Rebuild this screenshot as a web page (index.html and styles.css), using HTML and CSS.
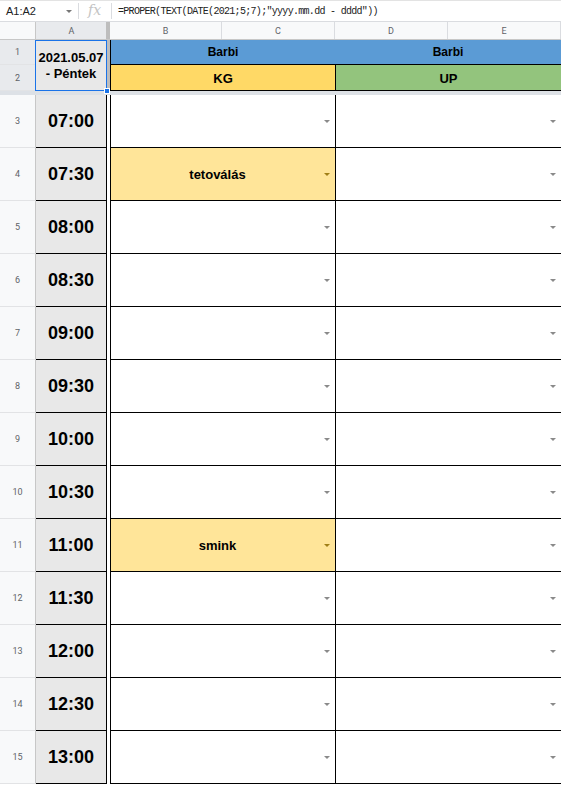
FILE: index.html
```html
<!DOCTYPE html>
<html lang="hu">

<head>
    <meta charset="UTF-8">
    <title>Beosztás</title>
    <link rel="stylesheet" href="styles.css">
</head>

<body>
    <div class="formula-bar">
        <div class="name-box">A1:A2<span class="caret"></span></div>
        <div class="fx">fx</div>
        <div class="formula">=PROPER(TEXT(DATE(2021;5;7);"yyyy.mm.dd - dddd"))</div>
    </div>

    <div class="col-heads">
        <div class="corner"></div>
        <div class="col-head sel">A</div>
        <div class="col-sep"></div>
        <div class="col-head">B</div>
        <div class="col-head">C</div>
        <div class="col-head">D</div>
        <div class="col-head">E</div>
    </div>

    <div class="frozen">
        <div class="row-num sel r1">1</div>
        <div class="row-num sel r2">2</div>
        <div class="date-cell">
            <span>2021.05.07</span>
            <span>- Péntek</span>
            <span class="handle"></span>
        </div>
        <div class="frozen-sep"></div>
        <div class="name bc">Barbi</div>
        <div class="name de">Barbi</div>
        <div class="place kg">KG</div>
        <div class="place up">UP</div>
    </div>
    <div class="frozen-line"></div>

    <div class="rows">
        <div class="row">
            <div class="row-num">3</div><div class="time">07:00</div><div class="gap"></div>
            <div class="slot"><span class="drop"></span></div><div class="slot"><span class="drop"></span></div>
        </div>
        <div class="row">
            <div class="row-num">4</div><div class="time">07:30</div><div class="gap"></div>
            <div class="slot booked">tetoválás<span class="drop"></span></div><div class="slot"><span class="drop"></span></div>
        </div>
        <div class="row">
            <div class="row-num">5</div><div class="time">08:00</div><div class="gap"></div>
            <div class="slot"><span class="drop"></span></div><div class="slot"><span class="drop"></span></div>
        </div>
        <div class="row">
            <div class="row-num">6</div><div class="time">08:30</div><div class="gap"></div>
            <div class="slot"><span class="drop"></span></div><div class="slot"><span class="drop"></span></div>
        </div>
        <div class="row">
            <div class="row-num">7</div><div class="time">09:00</div><div class="gap"></div>
            <div class="slot"><span class="drop"></span></div><div class="slot"><span class="drop"></span></div>
        </div>
        <div class="row">
            <div class="row-num">8</div><div class="time">09:30</div><div class="gap"></div>
            <div class="slot"><span class="drop"></span></div><div class="slot"><span class="drop"></span></div>
        </div>
        <div class="row">
            <div class="row-num">9</div><div class="time">10:00</div><div class="gap"></div>
            <div class="slot"><span class="drop"></span></div><div class="slot"><span class="drop"></span></div>
        </div>
        <div class="row">
            <div class="row-num">10</div><div class="time">10:30</div><div class="gap"></div>
            <div class="slot"><span class="drop"></span></div><div class="slot"><span class="drop"></span></div>
        </div>
        <div class="row">
            <div class="row-num">11</div><div class="time">11:00</div><div class="gap"></div>
            <div class="slot booked">smink<span class="drop"></span></div><div class="slot"><span class="drop"></span></div>
        </div>
        <div class="row">
            <div class="row-num">12</div><div class="time">11:30</div><div class="gap"></div>
            <div class="slot"><span class="drop"></span></div><div class="slot"><span class="drop"></span></div>
        </div>
        <div class="row">
            <div class="row-num">13</div><div class="time">12:00</div><div class="gap"></div>
            <div class="slot"><span class="drop"></span></div><div class="slot"><span class="drop"></span></div>
        </div>
        <div class="row">
            <div class="row-num">14</div><div class="time">12:30</div><div class="gap"></div>
            <div class="slot"><span class="drop"></span></div><div class="slot"><span class="drop"></span></div>
        </div>
        <div class="row">
            <div class="row-num">15</div><div class="time">13:00</div><div class="gap"></div>
            <div class="slot"><span class="drop"></span></div><div class="slot"><span class="drop"></span></div>
        </div>
    </div>
</body>

</html>
```

FILE: styles.css
```css
* {
    margin: 0;
    padding: 0;
    box-sizing: border-box;
}

body {
    width: 561px;
    background-color: #fff;
    font-family: "Liberation Sans", Arial, sans-serif;
    color: #000;
    overflow: hidden;
}

/* formula bar */
.formula-bar {
    height: 22px;
    display: flex;
    align-items: center;
    border-top: 1px solid #e3e3e3;
    border-bottom: 1px solid #dadce0;
    font-size: 11px;
}

.name-box {
    width: 79px;
    height: 16px;
    padding-left: 6px;
    display: flex;
    align-items: center;
    position: relative;
    color: #202124;
    border-right: 1px solid #dadce0;
}

.caret {
    position: absolute;
    left: 66px;
    top: 7px;
    border-left: 3px solid transparent;
    border-right: 3px solid transparent;
    border-top: 3px solid #777;
}

.fx {
    width: 33px;
    height: 16px;
    padding-left: 9px;
    font-family: "DejaVu Serif", serif;
    font-style: italic;
    font-size: 14px;
    line-height: 15px;
    color: #c4c4c4;
    border-right: 1px solid #dadce0;
}

.formula {
    padding-left: 6px;
    font-family: "Liberation Mono", monospace;
    font-size: 10px;
    letter-spacing: -0.7px;
    color: #222;
}

/* column headers */
.col-heads {
    height: 18px;
    display: grid;
    grid-template-columns: 36px 71px 3px 112px 113px 113px 1fr;
    background-color: #f8f9fa;
    border-bottom: 1px solid #c7c7c7;
    font-family: Roboto, sans-serif;
    font-size: 9px;
    color: #5f6368;
}

.corner {
    border-right: 1px solid #c7c7c7;
}

.col-head {
    display: flex;
    align-items: center;
    justify-content: center;
    border-right: 1px solid #dadce0;
}

.col-head.sel {
    background-color: #e8eaed;
    border-right: 0;
}

.col-sep {
    background-color: #bdbdbd;
    margin-left: -1px;
    width: 4px;
}

/* frozen rows 1-2 */
.frozen {
    display: grid;
    grid-template-columns: 36px 71px 3px 225px 1fr;
    grid-template-rows: 25px 26px;
    font-size: 12px;
    font-weight: bold;
}

.row-num {
    display: flex;
    align-items: center;
    justify-content: center;
    background-color: #f8f9fa;
    border-right: 1px solid #c7c7c7;
    border-bottom: 1px solid #e2e3e5;
    font-family: Roboto, sans-serif;
    font-weight: normal;
    font-size: 9px;
    color: #5f6368;
}

.row-num.sel {
    background-color: #e8eaed;
}

.r1 { grid-row: 1; grid-column: 1; }
.r2 { grid-row: 2; grid-column: 1; }

.date-cell {
    grid-row: 1 / 3;
    grid-column: 2;
    position: relative;
    display: flex;
    flex-direction: column;
    align-items: center;
    justify-content: center;
    background-color: #e8e8e8;
    border: 1px solid #1a73e8;
    margin-left: -1px;
    font-size: 13px;
    line-height: 16px;
    padding-top: 1px;
}

.handle {
    position: absolute;
    right: -4px;
    bottom: -4px;
    width: 6px;
    height: 6px;
    background-color: #1a73e8;
    border: 1px solid #fff;
}

.frozen-sep {
    grid-row: 1 / 3;
    grid-column: 3;
    background-color: #bdbdbd;
}

.name,
.place {
    display: flex;
    align-items: center;
    justify-content: center;
    border-bottom: 1px solid #000;
}

.name {
    background-color: #5b9bd5;
    grid-row: 1;
}

.name.bc {
    grid-column: 4;
    border-left: 1px solid #000;
}

.name.de {
    grid-column: 5;
}

.place {
    grid-row: 2;
    font-size: 13px;
    padding-top: 1px;
}

.kg {
    grid-column: 4;
    background-color: #ffd966;
    border-left: 1px solid #000;
}

.up {
    grid-column: 5;
    background-color: #93c47d;
    border-left: 1px solid #000;
}

.frozen-line {
    height: 4px;
    background-color: #dde1e6;
}

/* time rows */
.row {
    height: 53px;
    display: grid;
    grid-template-columns: 36px 71px 3px 225px 1fr;
}

.time {
    display: flex;
    align-items: center;
    justify-content: center;
    background-color: #e8e8e8;
    border-right: 1px solid #000;
    border-bottom: 1px solid #000;
    font-size: 18px;
    font-weight: bold;
    padding-top: 1px;
}

.gap {
    background-color: #fff;
}

.slot {
    position: relative;
    display: flex;
    align-items: center;
    justify-content: center;
    padding-right: 11px;
    border-left: 1px solid #000;
    border-bottom: 1px solid #000;
    font-size: 13px;
    font-weight: bold;
}

.slot.booked {
    background-color: #ffe599;
}

.drop {
    position: absolute;
    right: 5px;
    top: 25px;
    border-left: 3px solid transparent;
    border-right: 3px solid transparent;
    border-top: 3px solid #8a8a8a;
}

.booked .drop {
    border-top-color: #a07f16;
}
```
